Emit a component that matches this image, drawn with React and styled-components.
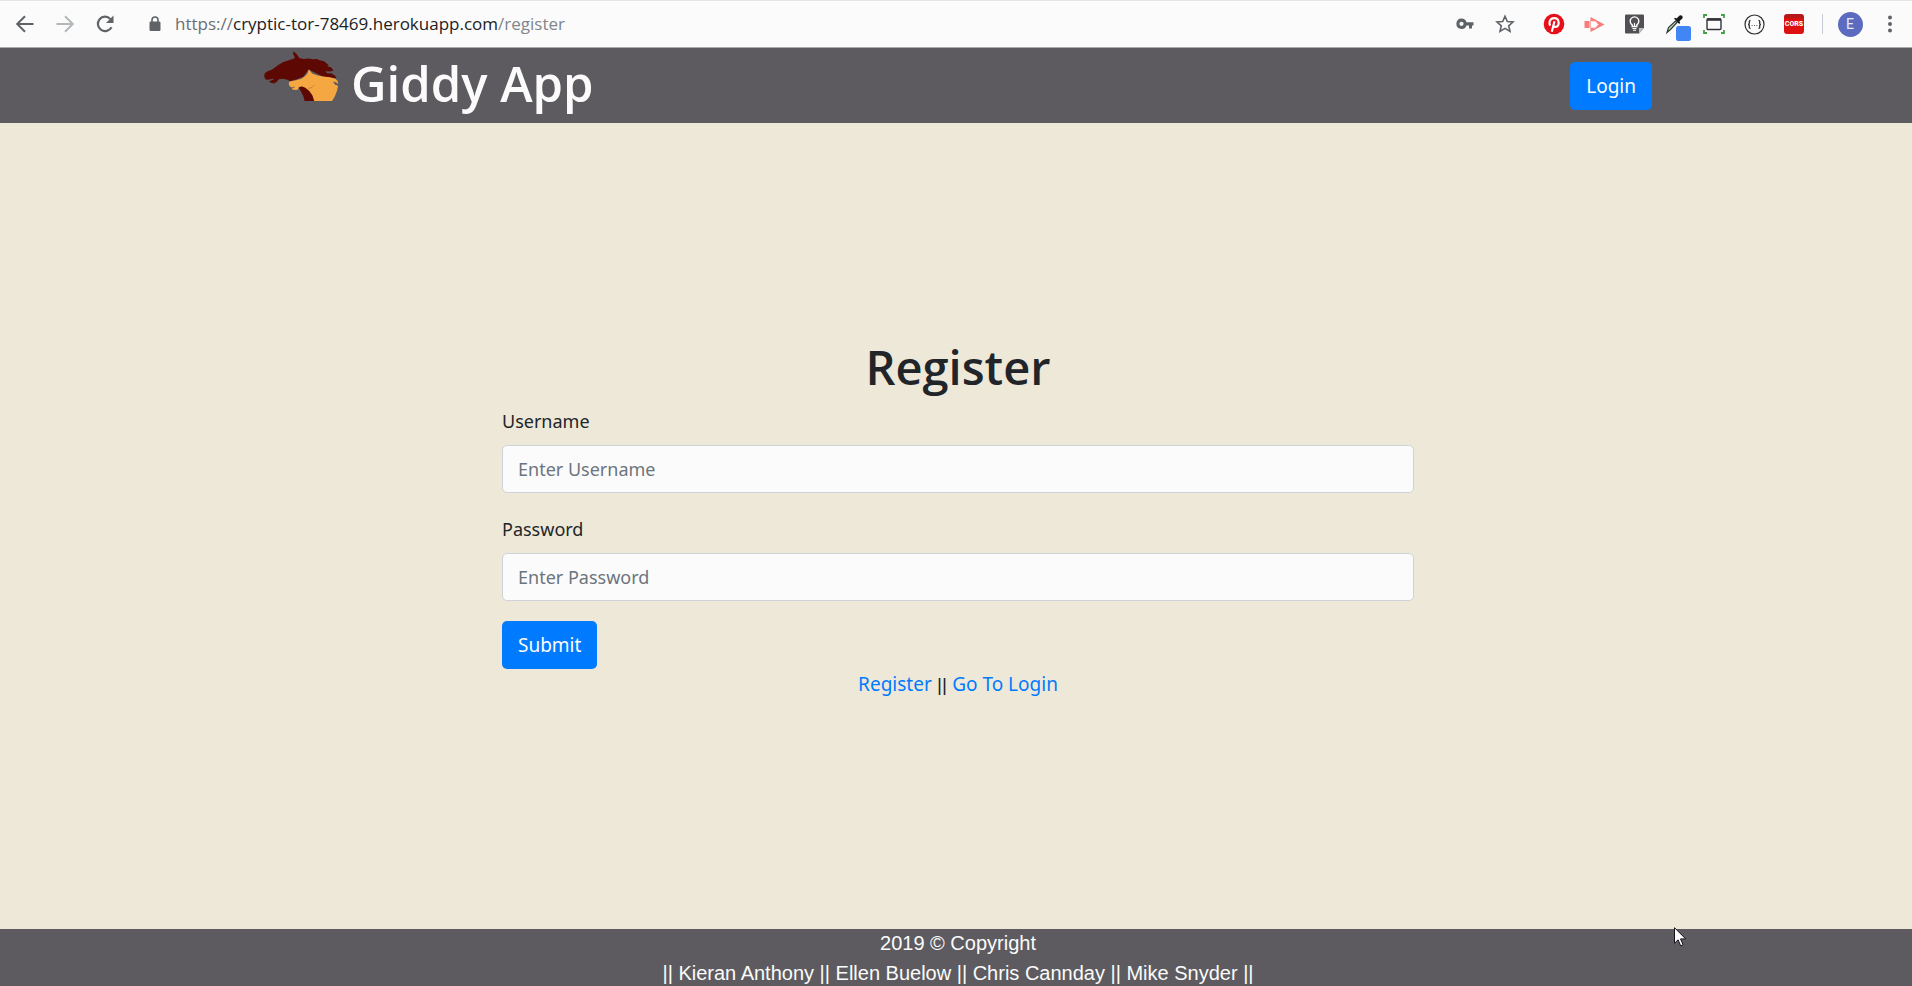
import React from "react";
import styled, { createGlobalStyle } from "styled-components";

const GlobalStyle = createGlobalStyle`
  *, *::before, *::after { box-sizing: border-box; }
  body {
    margin: 0;
    background: #eee8d8;
    color: #212529;
    font-family: "Noto Sans", "Open Sans", sans-serif;
    font-size: 18px;
    line-height: 30px;
  }
`;

const Shell = styled.div`
  display: flex;
  flex-direction: column;
  min-height: 100vh;
`;

/* Browser toolbar */

const BrowserBar = styled.div`
  display: flex;
  align-items: center;
  height: 48px;
  padding: 0 2px 0 5px;
  background: #fbfbfb;
  border-top: 1px solid #e6e6e6;
  border-bottom: 1px solid #a9acaa;
`;

const IconButton = styled.button`
  display: flex;
  align-items: center;
  justify-content: center;
  flex: none;
  width: 40px;
  height: 40px;
  padding: 0;
  border: 0;
  background: none;
  color: ${(p) => p.$color || "#5f6368"};
  svg { display: block; }
`;

const Address = styled.div`
  display: flex;
  align-items: center;
  flex: 1;
  min-width: 0;
  margin-left: 10px;
  white-space: nowrap;
`;

const Url = styled.span`
  color: #80868b;
  font-family: "Open Sans", sans-serif;
  font-size: 17px;
  line-height: 24px;
`;

const Scheme = styled.span`
  color: #6a6f74;
`;

const Host = styled.span`
  color: #202124;
`;

const Extensions = styled.div`
  display: flex;
  align-items: center;
  margin: 0 1px 0 9px;
`;

const Divider = styled.span`
  width: 1px;
  height: 20px;
  margin: 0 7px;
  background: #c6cbd3;
`;

const Avatar = styled.span`
  display: flex;
  align-items: center;
  justify-content: center;
  width: 25px;
  height: 25px;
  border-radius: 50%;
  background: #5c6bc0;
  color: #e8eaf6;
  font-family: Roboto, sans-serif;
  font-size: 14px;
  line-height: 25px;
`;

const CorsBadge = styled.span`
  width: 20px;
  height: 20px;
  border-radius: 3px;
  background: linear-gradient(#b51a1a 0 4px, #dd1111 4px);
  color: #fff;
  font-family: Roboto, sans-serif;
  font-size: 7px;
  font-weight: 900;
  line-height: 20px;
  text-align: center;
`;

/* Site */

const Navbar = styled.header`
  padding-left: 4px;
  background: #5d5b60;
`;

const Container = styled.div`
  display: flex;
  align-items: center;
  justify-content: space-between;
  max-width: 1388px;
  height: 75px;
  margin: 0 auto;
`;

const Brand = styled.a`
  display: flex;
  align-items: flex-start;
  gap: 12px;
  height: 75px;
  padding-top: 3px;
  color: #fbfbfb;
  text-decoration: none;
  svg { flex: none; }
`;

const BrandName = styled.span`
  font-family: "Open Sans", "Noto Sans", sans-serif;
  font-size: 49px;
  font-weight: 600;
  line-height: 64px;
`;

const Button = styled.button`
  height: 48px;
  padding: 0 16px;
  border: 0;
  border-radius: 5px;
  background: #007bff;
  color: #fbfbfb;
  font: inherit;
  font-size: 19px;
`;

const Main = styled.main`
  display: flex;
  flex: 1;
  flex-direction: column;
  justify-content: center;
  padding: 0 0 18px 4px;
`;

const Panel = styled.section`
  width: 100%;
  max-width: 912px;
  margin: 0 auto;
`;

const Title = styled.h1`
  margin: 0 0 6px;
  font-family: "Open Sans", "Noto Sans", sans-serif;
  font-size: 47px;
  font-weight: 600;
  line-height: 64px;
  text-align: center;
`;

const Field = styled.div`
  margin-bottom: 20px;
`;

const Label = styled.label`
  display: block;
  margin-bottom: 8px;
  line-height: 32px;
`;

const TextInput = styled.input`
  display: block;
  width: 100%;
  height: 48px;
  padding: 1px 15px 0;
  border: 1px solid #ced4da;
  border-radius: 5px;
  background: #fbfbfb;
  color: #495057;
  font: inherit;
  &::placeholder { color: #6c757d; opacity: 1; }
`;

const Links = styled.nav`
  font-family: "Liberation Sans", Arial, sans-serif;
  font-size: 19px;
  text-align: center;
`;

const TextLink = styled.a`
  color: #007bff;
  font-family: "Noto Sans", "Open Sans", sans-serif;
  text-decoration: none;
`;

const Footer = styled.footer`
  display: flex;
  flex-direction: column;
  gap: 4px;
  padding: 1px 0 0 4px;
  background: #5d5b60;
  color: #fbfbfb;
  font-family: "Liberation Sans", Arial, sans-serif;
  font-size: 20px;
  line-height: 26px;
  text-align: center;
`;

const Credit = styled.p`
  margin: 0;
`;

const Pointer = styled.svg`
  position: absolute;
  left: 1674px;
  top: 927px;
  pointer-events: none;
`;

const Stroke = ({ children, size = 20, width = 2 }) => (
  <svg width={size} height={size} viewBox="0 0 20 20" fill="none" stroke="currentColor" strokeWidth={width}>
    {children}
  </svg>
);

const HorseLogo = () => (
  <svg width="75" height="50" viewBox="42 20 225 151" aria-hidden="true">
    <path
      fill="#5e0803"
      d="M130 21 L139 28 L148 41 L160 44 L176 43 L188 45 L200 44 L212 49 L221 50 L230 57 L237 64 L232 67 L244 69 L251 80 L240 82 L226 81 L232 87 L246 88 L256 95 L260 102 L220 98 L176 76 L160 98 L138 106 L121 111 L112 107 L98 104 L86 105 L80 113 L72 118 L63 116 L56 112 L68 107 L72 103 L54 107 L46 106 L42 98 L43 88 L52 81 L66 76 L82 64 L98 54 L116 48 L132 43 L134 39 L129 28 Z"
    />
    <path
      fill="#f5a742"
      d="M177 75 L182 83 L188 89 L204 94 L220 97 L240 99 L257 104 L263 110 L266 120 L254 112 L257 119 L265 125 L262 139 L256 155 L247 171 L192 171 L188 157 L180 145 L170 136 L158 128 L148 128 L143 137 L136 138 L127 136 L126 132 L133 130 L134 127 L124 130 L118 126 L116 119 L118 112 L138 108 L154 104 L164 97 L172 89 Z"
    />
    <path fill="#5e0803" d="M146 130 L156 127 L166 131 L178 141 L187 154 L193 171 L164 171 L160 157 L153 142 Z" />
    <path fill="none" stroke="#a86a22" strokeWidth="1.5" d="M193 122 Q189 133 174 133" />
    <path fill="#5d5b60" d="M249 112 L259 117 L266 125 L256 122 Z" />
  </svg>
);

function BrowserToolbar() {
  return (
    <BrowserBar>
      <IconButton aria-label="Back">
        <Stroke><path d="M18.5 10H3M10 2.2L2.2 10l7.800 7.800" /></Stroke>
      </IconButton>
      <IconButton aria-label="Forward" $color="#b5b8ba">
        <Stroke><path d="M1.500 10H17M10 2.200L17.800 10 10 17.800" /></Stroke>
      </IconButton>
      <IconButton aria-label="Reload">
        <svg width="20" height="20" viewBox="0 0 20 20">
          <path d="M16.500 13.200A7.200 7.200 0 1 1 15.300 4.900" fill="none" stroke="currentColor" strokeWidth="2.200" />
          <path d="M18.500 1.500V9H11z" fill="currentColor" />
        </svg>
      </IconButton>
      <Address>
        <IconButton aria-label="View site information">
          <svg width="12" height="16" viewBox="0 0 12 16">
            <path d="M3 7V4a3 3 0 0 1 6 0v3" fill="none" stroke="currentColor" strokeWidth="1.600" />
            <rect x="0.500" y="5.500" width="11" height="9.500" rx="1.200" fill="currentColor" />
          </svg>
        </IconButton>
        <Url>
          <Scheme>https://</Scheme>
          <Host>cryptic-tor-78469.herokuapp.com</Host>
          /register
        </Url>
      </Address>
      <IconButton aria-label="Saved passwords">
        <svg width="18" height="12" viewBox="0 0 18 12" fill="currentColor">
          <path
            fillRule="evenodd"
            d="M5.500 0.500a5.200 5.200 0 0 1 5 3.700H17.500v3.200h-1.500v3H13V7.400h-2.500A5.200 5.200 0 1 1 5.500 0.500zM5.500 3.700a2 2 0 1 0 0 4.200 2 2 0 0 0 0-4.200z"
          />
        </svg>
      </IconButton>
      <IconButton aria-label="Bookmark this page">
        <svg width="20" height="20" viewBox="0 0 20 20" fill="none" stroke="currentColor" strokeWidth="1.600">
          <path d="M10 2.200l2.300 5.300 5.700.5-4.300 3.800 1.300 5.600-5-3-5 3 1.300-5.600L2 8l5.700-.5z" />
        </svg>
      </IconButton>
      <Extensions>
        <IconButton aria-label="Pinterest">
          <svg width="22" height="22" viewBox="0 0 22 22">
            <circle cx="11" cy="11" r="10.300" fill="#e60f1a" />
            <path
              d="M7.300 12.600C5.800 10.800 6 5.300 11.300 5.200c5.300 0 5.800 8.300 1.400 8.700-1.300.1-2.200-.7-2.200-.7M11.500 8.300L8.800 18.800"
              fill="none"
              stroke="#fff"
              strokeWidth="2.200"
            />
          </svg>
        </IconButton>
        <IconButton aria-label="Screen recorder">
          <svg width="21" height="17" viewBox="0 0 21 17">
            <path d="M0.500 5h5v7h-5z" fill="#f97b7b" />
            <path d="M6.500 1l14 7.500L6.500 16z" fill="#f97b7b" />
            <path d="M6.500 5h5l3 3.500-3 3.500h-5z" fill="#fff" stroke="#f9a0a0" strokeWidth="0.800" />
          </svg>
        </IconButton>
        <IconButton aria-label="Notes">
          <svg width="19" height="20" viewBox="0 0 19 20">
            <path d="M0 1.500Q0 .5 1 .5h17q1 0 1 1V14l-5 5.500H1q-1 0-1-1z" fill="#535055" />
            <path d="M14 19.500V14h5z" fill="#bdbdbd" />
            <path d="M7.200 12.500v-1.700a4.300 4.300 0 1 1 4.600 0v1.700z" fill="none" stroke="#fff" strokeWidth="1.400" />
            <path d="M7.500 14.500h4M8 16.300h3M9.500 9v3" stroke="#fff" strokeWidth="1.100" />
          </svg>
        </IconButton>
        <IconButton aria-label="Color picker">
          <svg width="34" height="34" viewBox="0 0 34 34">
            <path d="M10 25.500l1.500-5 7-6.500 1.500 1.500-6.500 7z" fill="#b9d8bd" stroke="#2f3a33" strokeWidth="1.200" />
            <path d="M17 11.500l1.300-.8 1.400.8 2.500-2.700q1.500-1.300 2.900 0t0 2.900l-2.700 2.500.8 1.400-1 1.300z" fill="#17171d" />
            <rect x="19" y="19" width="15" height="15" rx="2.500" fill="#4285f4" />
          </svg>
        </IconButton>
        <IconButton aria-label="Capture page">
          <svg width="22" height="20" viewBox="0 0 22 20" fill="none">
            <path d="M1 4V1h3M18 1h3v3M21 16v3h-3M4 19H1v-3" stroke="#43a047" strokeWidth="1.800" />
            <rect x="4" y="5" width="14" height="10.500" rx="1" stroke="#35343a" strokeWidth="1.400" />
            <path d="M4 5.500h14" stroke="#35343a" strokeWidth="2.600" />
          </svg>
        </IconButton>
        <IconButton aria-label="JSON viewer">
          <svg width="21" height="21" viewBox="0 0 21 21" fill="none" stroke="#303036">
            <circle cx="10.500" cy="10.500" r="9.500" strokeWidth="1.200" />
            <path
              d="M6.500 6.500Q5 6.500 5.300 8.500t-1.300 2q1.600 0 1.300 2t1.200 2M14.500 6.500q1.500 0 1.200 2t1.300 2q-1.600 0-1.300 2t-1.200 2"
              strokeWidth="1.300"
            />
            <path d="M7.700 11.500h.8M10.100 11.500h.8M12.500 11.500h.8" strokeWidth="1" />
          </svg>
        </IconButton>
        <IconButton aria-label="CORS">
          <CorsBadge>CORS</CorsBadge>
        </IconButton>
      </Extensions>
      <Divider />
      <IconButton aria-label="Profile">
        <Avatar>E</Avatar>
      </IconButton>
      <IconButton aria-label="Menu">
        <svg width="4" height="18" viewBox="0 0 4 18" fill="currentColor">
          <circle cx="2" cy="2.500" r="2" />
          <circle cx="2" cy="9" r="2" />
          <circle cx="2" cy="15.500" r="2" />
        </svg>
      </IconButton>
    </BrowserBar>
  );
}

export default function App() {
  return (
    <Shell>
      <GlobalStyle />
      <BrowserToolbar />
      <Navbar>
        <Container>
          <Brand href="#home">
            <HorseLogo />
            <BrandName>Giddy App</BrandName>
          </Brand>
          <Button type="button">Login</Button>
        </Container>
      </Navbar>
      <Main>
        <Panel>
          <Title>Register</Title>
          <form onSubmit={(e) => e.preventDefault()}>
            <Field>
              <Label htmlFor="username">Username</Label>
              <TextInput id="username" type="text" placeholder="Enter Username" />
            </Field>
            <Field>
              <Label htmlFor="password">Password</Label>
              <TextInput id="password" type="password" placeholder="Enter Password" />
            </Field>
            <Button type="submit">Submit</Button>
          </form>
          <Links>
            <TextLink href="#register">Register</TextLink> || <TextLink href="#login">Go To Login</TextLink>
          </Links>
        </Panel>
      </Main>
      <Footer>
        <Credit>2019 © Copyright</Credit>
        <Credit>|| Kieran Anthony || Ellen Buelow || Chris Cannday || Mike Snyder ||</Credit>
      </Footer>
      <Pointer width="13" height="20" viewBox="0 0 13 20" aria-hidden="true">
        <path d="M0.500 0.700v15.500l3.600-3.400 2.600 6 2.400-1-2.600-5.900h5.200z" fill="#fff" stroke="#14121c" />
      </Pointer>
    </Shell>
  );
}
